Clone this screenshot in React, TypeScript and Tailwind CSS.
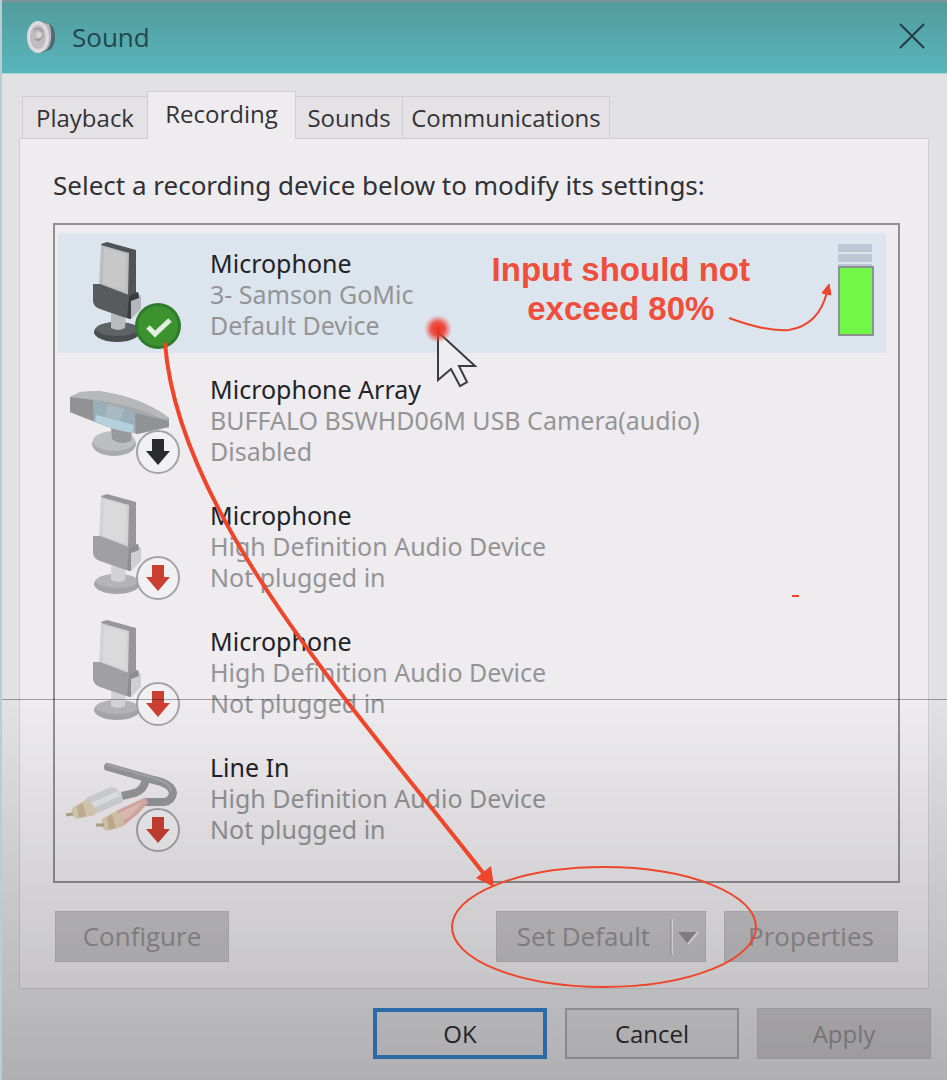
import type { ReactNode } from 'react'

type Status = 'default' | 'disabled' | 'unplugged'

type Device = {
    id: number
    name: string
    detail: string
    state: string
    status: Status
    kind: 'mic' | 'camera' | 'line'
}

const devices: Device[] = [
    { id: 1, name: 'Microphone', detail: '3- Samson GoMic', state: 'Default Device', status: 'default', kind: 'mic' },
    { id: 2, name: 'Microphone Array', detail: 'BUFFALO BSWHD06M USB Camera(audio)', state: 'Disabled', status: 'disabled', kind: 'camera' },
    { id: 3, name: 'Microphone', detail: 'High Definition Audio Device', state: 'Not plugged in', status: 'unplugged', kind: 'mic' },
    { id: 4, name: 'Microphone', detail: 'High Definition Audio Device', state: 'Not plugged in', status: 'unplugged', kind: 'mic' },
    { id: 5, name: 'Line In', detail: 'High Definition Audio Device', state: 'Not plugged in', status: 'unplugged', kind: 'line' },
]

const SpeakerIcon = () => (
    <svg width="32" height="36" viewBox="0 0 32 36" aria-hidden="true">
        <path d="M12 1 L24 4 Q30 9 29 19 Q28 28 23 30 L14 33 Z" fill="#4d6a70" />
        <path d="M14 2 L23 4 Q26 10 25 19 Q24 27 20 30 L13 33 Z" fill="#b9b7bb" />
        <ellipse cx="12" cy="17" rx="11" ry="16" fill="#dddbdd" />
        <ellipse cx="12" cy="17" rx="8" ry="12" fill="#bfbbbf" />
        <path d="M8 10 Q14 6 17 13 M9 19 Q14 22 17 15" fill="none" stroke="#a09ca1" strokeWidth="2" />
        <circle cx="13" cy="15" r="3" fill="#d5d2d4" />
    </svg>
)

const MicDrawing = ({ dim }: { dim: boolean }) => (
    <g>
        <ellipse cx="59" cy="99" rx="23" ry="10" fill={dim ? '#a5a5a7' : '#4a4d50'} />
        <ellipse cx="59" cy="96" rx="21" ry="7" fill={dim ? '#b4b4b6' : '#606366'} />
        <path d="M53 80 L68 84 L67 95 Q60 99 53 95 Z" fill={dim ? '#d3d3d5' : '#b9bcbf'} />
        <path d="M73 65 L83 62 L83 76 L73 86 Z" fill={dim ? '#cfcfd1' : '#b3b6ba'} />
        <path d="M43 11 L49 9 L78 17 L78 61 L70 63 Z" fill={dim ? '#979799' : '#515457'} />
        <path d="M43 12 L71 20 L70 63 L41 53 Z" fill={dim ? '#d3d3d5' : '#bcbdbe'} />
        <path d="M46 15 L68 21 L67 58 L45 51 Z" fill={dim ? '#dadadb' : '#c8c8c8'} />
        <path d="M35 51 L42 51 L71 62 L80 59 L81 64 L73 67 L73 86 L65 84 L42 76 Q35 73 35 68 Z" fill={dim ? '#a0a0a2' : '#585b5e'} />
        <path d="M71 63 L80 59 L81 65 L73 68 L73 86 L69 85 Z" fill={dim ? '#8e8e91' : '#393c40'} />
    </g>
)

const CameraDrawing = () => (
    <g>
        <ellipse cx="56" cy="85" rx="22" ry="12" fill="#a9acae" />
        <ellipse cx="56" cy="82" rx="21" ry="10" fill="#bcbec0" />
        <path d="M53 68 L74 72 L73 82 Q62 87 54 80 Z" fill="#97999c" />
        <path d="M12 38 L22 33 L40 32 Q84 38 111 59 L111 68 L80 75 Q48 69 12 53 Z" fill="#a6a9ab" />
        <path d="M12 38 L35 41 L36 62 L12 53 Z" fill="#909295" />
        <path d="M35 41 Q58 45 77 54 L75 74 Q54 71 36 62 Z" fill="#9aafba" />
        <path d="M38 56 Q55 60 76 66 L75 74 Q54 71 37 62 Z" fill="#b3d0dc" />
        <path d="M50 45 L66 50 L62 62 L47 58 Z" fill="#a9b9c0" />
        <path d="M77 54 L111 62 L111 68 L78 75 Z" fill="#909396" />
        <path d="M12 38 L22 33 L40 32 Q84 38 111 59 L104 60 Q70 43 12 38 Z" fill="#b6b8ba" />
    </g>
)

const LineDrawing = () => (
    <g>
        <path d="M50 30 L96 43 Q114 47 115 56 Q114 64 106 65 L88 65" fill="none" stroke="#96979a" strokeWidth="8" strokeLinecap="round" />
        <path d="M88 42 Q86 53 77 56 L64 59" fill="none" stroke="#96979a" strokeWidth="8" />
        <path d="M50 28 L96 41 Q112 46 113 53" fill="none" stroke="#a6a7aa" strokeWidth="2" strokeLinecap="round" />
        <path d="M28 61 L53 50 Q62 50 65 65 L37 77 Z" fill="#d3d4d7" />
        <path d="M32 66 L60 54 L62 59 L35 71 Z" fill="#e7e7e8" />
        <path d="M14 71 L29 62 Q37 67 37 78 L18 82 Q12 78 14 71 Z" fill="#ddcfb6" />
        <path d="M19 69 L25 66 L28 79 L21 81 Z" fill="#c9b699" />
        <path d="M15 77 L8 78" stroke="#b3a78f" strokeWidth="3" />
        <path d="M58 74 L88 60 L90 66 L80 77 L65 89 Z" fill="#dcaea7" />
        <path d="M61 76 L84 65 L75 77 L66 83 Z" fill="#e8c3bc" />
        <path d="M44 82 L58 74 Q67 79 66 89 L49 94 Q42 91 44 82 Z" fill="#dccbb0" />
        <path d="M49 80 L54 77 L58 91 L51 93 Z" fill="#cab396" />
        <path d="M46 88 L38 88" stroke="#b3a78f" strokeWidth="3" />
    </g>
)

const StatusBadge = ({ status }: { status: Status }) => {
    if (status === 'default') {
        return (
            <g>
                <circle cx="100" cy="93" r="23" fill="#2f7a2c" />
                <circle cx="100" cy="93" r="20" fill="#3c922f" />
                <path d="M90 94 L97 101 L112 87" fill="none" stroke="#e4efdf" strokeWidth="5" />
            </g>
        )
    }
    return (
        <g>
            <circle cx="100" cy="93" r="21" fill="#f1f0f2" stroke="#a3a3a5" strokeWidth="2" />
            <path
                d="M94 80 L106 80 L106 92 L112 92 L100 106 L88 92 L94 92 Z"
                fill={status === 'disabled' ? '#2b2c2e' : '#cc3f33'}
            />
        </g>
    )
}

const DeviceIcon = ({ device }: { device: Device }) => (
    <svg width="152" height="120" viewBox="0 0 152 120" className="shrink-0" aria-hidden="true">
        {device.kind === 'mic' && <MicDrawing dim={device.status !== 'default'} />}
        {device.kind === 'camera' && <CameraDrawing />}
        {device.kind === 'line' && <LineDrawing />}
        <StatusBadge status={device.status} />
    </svg>
)

const LevelMeter = () => (
    <div className="mt-[11px] flex w-9 shrink-0 flex-col" role="meter" aria-label="Input level" aria-valuenow={80}>
        <div className="mb-0.5 h-2 w-[34px] bg-[#bcc8d5]" />
        <div className="mb-0.5 h-2 w-[34px] bg-[#bcc8d5]" />
        <div className="h-0.5 w-[34px] bg-[#bcc8d5]" />
        <div className="h-[70px] border-2 border-[#8e9092] bg-[#71f748]" />
    </div>
)

const InputNote = () => (
    <div className="relative mr-[88px] shrink-0 pt-[17px] text-center font-['Liberation_Sans',Arial,sans-serif] text-[33px] leading-[39px] font-bold text-[#f04e3a]">
        <p>Input should not</p>
        <p>exceed 80%</p>
        <svg width="110" height="56" viewBox="0 0 110 56" className="absolute top-[46px] left-[234px]" aria-hidden="true">
            <path d="M3 39 Q41 53 63 51 Q93 46 101 13" fill="none" stroke="#ee452b" strokeWidth="2" />
            <path d="M103 5 L105 16 L96 14 Z" fill="#ee452b" stroke="#ee452b" />
        </svg>
    </div>
)

const DeviceRow = ({ device }: { device: Device }) => {
    const selected = device.status === 'default'
    return (
        <li
            role="option"
            aria-selected={selected}
            className={`flex h-[120px] items-start pr-3 ${selected ? 'bg-[#dce5ee]' : ''}`}
        >
            <DeviceIcon device={device} />
            <div className="flex-1 pt-[15px] font-['Noto_Sans','Open_Sans',sans-serif] text-[25px] leading-[31px] whitespace-nowrap text-[#949497]">
                <p className="text-[#222327]">{device.name}</p>
                <p>{device.detail}</p>
                <p>{device.state}</p>
            </div>
            {selected && <InputNote />}
            {selected && <LevelMeter />}
        </li>
    )
}

const Tab = ({ children, className, active = false }: { children: ReactNode; className: string; active?: boolean }) => (
    <button
        type="button"
        role="tab"
        aria-selected={active}
        className={`border border-b-0 border-[#cfced1] text-[24px] whitespace-nowrap text-[#333337] ${
            active ? 'relative -mb-px h-12 bg-[#eeecef] pb-1' : 'h-[42px] bg-[#e4e2e5]'
        } ${className}`}
    >
        {children}
    </button>
)

const disabledButton = 'h-[51px] border border-[#bbb9bc] bg-[#c6c4c7] text-[#929093]'

// Hand-drawn marks that sit on top of the whole dialog
const Markup = () => (
    <svg width="947" height="1080" viewBox="2 0 947 1080" className="pointer-events-none absolute top-0 left-0 z-10" aria-hidden="true">
        <defs>
            <radialGradient id="click">
                <stop offset="0" stopColor="#ee2f22" />
                <stop offset="0.5" stopColor="#ee3a2e" stopOpacity="0.85" />
                <stop offset="1" stopColor="#ee5a50" stopOpacity="0" />
            </radialGradient>
        </defs>
        <path d="M438 332 L438 380 L451 369 L460 386 L467 382 L459 366 L475 366 Z" fill="#eeedf0" stroke="#3b3c40" strokeWidth="2" />
        <circle cx="438" cy="329" r="14" fill="url(#click)" />
        <path d="M165 343 C178 515 352 705 484 874" fill="none" stroke="#ee452b" strokeWidth="4" />
        <path d="M494 887 L476 878 L491 866 Z" fill="#ee452b" />
        <path d="M792 596 L799 596" stroke="#ee452b" strokeWidth="2" />
    </svg>
)

const App = () => {
    return (
        <div className="relative flex min-h-screen flex-col border-l-2 border-[#b8cfd2] bg-[#e2e1e4] font-['Open_Sans','Noto_Sans',sans-serif]">
            <header className="flex h-[74px] items-center justify-between border-t-2 border-b border-t-[#7f9295] border-b-[#a5d8db] bg-linear-to-b from-[#529c9d] to-[#58b5ba] pr-[22px] pl-6">
                <div className="flex items-center gap-3.5">
                    <SpeakerIcon />
                    <h1 className="text-[26px] text-[#24454f]">Sound</h1>
                </div>
                <button type="button" aria-label="Close" className="pb-1">
                    <svg width="26" height="26" viewBox="0 0 26 26" aria-hidden="true">
                        <path d="M1 1 L25 25 M25 1 L1 25" stroke="#263b45" strokeWidth="2" />
                    </svg>
                </button>
            </header>

            <main className="flex flex-1 flex-col px-[17px] pt-[17px]">
                <div role="tablist" className="flex items-end pl-[3px]">
                    <Tab className="w-[125px] border-r-0">Playback</Tab>
                    <Tab className="w-[149px]" active>Recording</Tab>
                    <Tab className="w-[107px] border-l-0">Sounds</Tab>
                    <Tab className="w-[207px] border-l-0">Communications</Tab>
                </div>

                <section className="mr-px flex flex-col border border-[#cfced1] bg-[#eeecef] px-[33px] pt-7 pb-[26px]">
                    <h2 id="prompt" className="font-['Noto_Sans','Open_Sans',sans-serif] text-[26px] leading-9 text-[#303135]">
                        Select a recording device below to modify its settings:
                    </h2>
                    <ul
                        role="listbox"
                        aria-labelledby="prompt"
                        className="mt-5 -mr-[5px] flex flex-col gap-1.5 border-2 border-[#8f9092] pt-2 pr-3 pb-6 pl-[3px]"
                    >
                        {devices.map((device) => (
                            <DeviceRow key={device.id} device={device} />
                        ))}
                    </ul>

                    <div className="mt-7 -mr-[3px] flex items-center gap-[18px] pl-0.5 text-[26px]">
                        <button type="button" disabled className={`mr-auto w-[174px] ${disabledButton}`}>
                            Configure
                        </button>
                        <div className="relative flex">
                            <button type="button" disabled className={`w-[174px] border-r-0 ${disabledButton}`}>
                                Set Default
                            </button>
                            <button type="button" disabled aria-label="More defaults" className={`flex w-9 items-center border-l-0 ${disabledButton}`}>
                                <svg width="34" height="38" viewBox="0 0 34 38" aria-hidden="true">
                                    <path d="M2 1 V37" stroke="#eeedf0" strokeWidth="2" />
                                    <path d="M1 1 V37" stroke="#9b999c" strokeWidth="1" />
                                    <path d="M8 14 L28 14 L18 26 Z" fill="#929093" />
                                    <path d="M28 14 L18 26" stroke="#e8e7e9" strokeWidth="2" />
                                </svg>
                            </button>
                            <svg width="306" height="122" viewBox="0 0 306 122" className="pointer-events-none absolute -top-[45px] -left-[45px] z-10 max-w-none" aria-hidden="true">
                                <ellipse cx="153" cy="61" rx="152" ry="60" fill="none" stroke="#ee452b" strokeWidth="2" />
                            </svg>
                        </div>
                        <button type="button" disabled className={`w-[174px] ${disabledButton}`}>
                            Properties
                        </button>
                    </div>
                </section>

                <footer className="-mr-px flex justify-end gap-[18px] pt-[19px] pb-[21px] text-[24px] text-[#2c2c30]">
                    <button type="button" className="h-[51px] w-[174px] border-4 border-[#3683cf] bg-[#dcdbde]">OK</button>
                    <button type="button" className="h-[51px] w-[174px] border-2 border-[#abaaac] bg-[#dad9dc]">Cancel</button>
                    <button type="button" disabled className={`w-[174px] ${disabledButton}`}>Apply</button>
                </footer>
            </main>

            {/* shade that falls over the lower part of the window */}
            <div className="pointer-events-none absolute inset-x-0 bottom-0 h-[381px] border-t border-black/15 bg-linear-to-b from-black/0 to-black/22" />
            <Markup />
        </div>
    )
}

export default App
